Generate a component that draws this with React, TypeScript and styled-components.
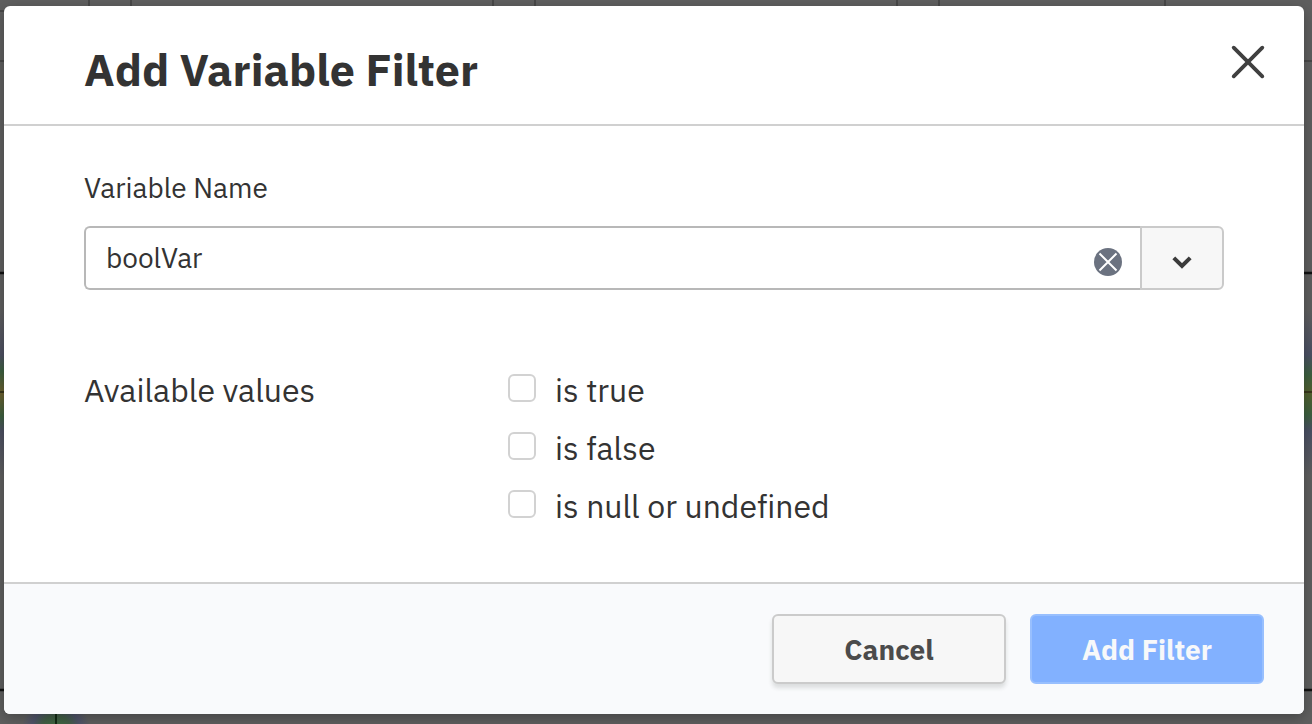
import React from 'react';
import styled, { createGlobalStyle } from 'styled-components';

const GlobalStyle = createGlobalStyle`
  * { box-sizing: border-box; }
  html, body { margin: 0; height: 100%; overflow: hidden; }
  body {
    font-family: "IBM Plex Sans", Roboto, "Noto Sans", sans-serif;
    font-variant-ligatures: none;
    color: #333;
    background: #5a5a5a;
    -webkit-font-smoothing: antialiased;
  }
`;

const Screen = styled.div`
  position: relative;
  width: 1312px;
  height: 724px;
  padding: 6px 8px 10px 4px;
  overflow: hidden;
`;

const Diagram = styled.svg`
  position: absolute;
  inset: 0;
`;

const Dialog = styled.section`
  position: relative;
  display: flex;
  flex-direction: column;
  height: 708px;
  border-radius: 6px;
  overflow: hidden;
  background: #fff;
  box-shadow: 0 4px 14px rgba(0, 0, 0, 0.28);
`;

const Header = styled.header`
  display: flex;
  justify-content: space-between;
  height: 120px;
  padding: 38px 38px 0 80px;
  border-bottom: 2px solid #d0d0d0;
`;

const Title = styled.h1`
  margin: -1px 0 0;
  font-size: 44.8px;
  line-height: 52px;
  font-weight: 700;
  white-space: nowrap;
`;

const IconButton = styled.button`
  display: flex;
  width: 36px;
  height: 36px;
  padding: 0;
  border: 0;
  background: none;
`;

const Body = styled.div`
  flex: 1;
  padding: 45px 80px 0;
`;

const Text = styled.span<{ $large?: boolean }>`
  font-size: ${(p) => (p.$large ? 32 : 28)}px;
  line-height: ${(p) => (p.$large ? 32 : 34)}px;
  white-space: nowrap;
`;

const FieldLabel = styled.label`
  display: flex;
  height: 55px;
`;

const Combo = styled.div`
  display: flex;
  height: 64px;
`;

const ComboInput = styled.div`
  flex: 1;
  display: flex;
  align-items: center;
  justify-content: space-between;
  padding: 0 18px 0 20px;
  border: 2px solid #b8b8b8;
  border-right: 0;
  border-radius: 6px 0 0 6px;
`;

const ClearButton = styled(IconButton)`
  width: 28px;
  height: 28px;
  margin-top: 8px;
`;

const ComboToggle = styled(IconButton)`
  width: 84px;
  height: 64px;
  align-items: center;
  justify-content: center;
  padding-top: 8px;
  border: 2px solid #cacaca;
  border-radius: 0 6px 6px 0;
  background: #f7f7f7;
`;

const Values = styled.div`
  display: grid;
  grid-template-columns: 424px 1fr;
  margin-top: 84px;
`;

const Options = styled.div`
  display: flex;
  flex-direction: column;
  gap: 24px;
`;

const Option = styled.label`
  display: flex;
  align-items: flex-start;
  gap: 19px;
  height: 34px;
`;

const Checkbox = styled.input`
  appearance: none;
  width: 28px;
  height: 28px;
  margin: 0;
  border: 2px solid #d2d2d2;
  border-radius: 6px;
  background: #fff;
`;

const Footer = styled.footer`
  display: flex;
  justify-content: flex-end;
  gap: 24px;
  height: 132px;
  padding: 30px 40px 0;
  border-top: 2px solid #d0d0d0;
  background: #f9fafc;
`;

const Button = styled.button<{ $primary?: boolean }>`
  width: 234px;
  height: 70px;
  padding: 2px 0 0;
  font: 700 28px/34px "IBM Plex Sans", Roboto, "Noto Sans", sans-serif;
  border: 2px solid ${(p) => (p.$primary ? '#98bffe' : '#cbcbcb')};
  border-radius: 6px;
  color: ${(p) => (p.$primary ? '#f7f8fa' : '#4b4b4b')};
  background: ${(p) => (p.$primary ? '#82b1ff' : '#f7f7f7')};
  box-shadow: ${(p) => (p.$primary ? 'none' : '0 4px 4px rgba(50, 60, 50, 0.14)')};
`;

const options = ['is true', 'is false', 'is null or undefined'];

const HeatDiagram = () => (
  <Diagram width="1312" height="724">
    <defs>
      <linearGradient id="heatLeft" x1="0" y1="0" x2="0" y2="1">
        <stop offset="0" stopColor="#5f5f5f" />
        <stop offset="0.27" stopColor="#4d5062" />
        <stop offset="0.37" stopColor="#3d6040" />
        <stop offset="0.5" stopColor="#6b602f" />
        <stop offset="0.64" stopColor="#3d6040" />
        <stop offset="0.73" stopColor="#4c5062" />
        <stop offset="1" stopColor="#5f5f5f" />
      </linearGradient>
      <linearGradient id="heatRight" x1="0" y1="0" x2="0" y2="1">
        <stop offset="0" stopColor="#5f5f5f" />
        <stop offset="0.27" stopColor="#4b5064" />
        <stop offset="0.39" stopColor="#3d6040" />
        <stop offset="0.5" stopColor="#52602f" />
        <stop offset="0.63" stopColor="#3d6040" />
        <stop offset="0.73" stopColor="#4a5064" />
        <stop offset="1" stopColor="#5f5f5f" />
      </linearGradient>
      <radialGradient id="spot">
        <stop offset="0" stopColor="#3d6b40" />
        <stop offset="0.4" stopColor="#435f47" />
        <stop offset="0.7" stopColor="#50546a" />
        <stop offset="1" stopColor="#5f5f5f" />
      </radialGradient>
    </defs>
    <rect width="1312" height="724" fill="#5f5f5f" />
    <rect y="310" width="656" height="166" fill="url(#heatLeft)" />
    <rect x="656" y="310" width="656" height="166" fill="url(#heatRight)" />
    <ellipse cx="56" cy="727" rx="34" ry="28" fill="url(#spot)" />
    <path d="M89 0V8M131 0V8M493 0V8M535 0V8M897 0V8M939 0V8M1165 0V8M0 11H4M0 61H4M1304 61H1312" stroke="#484848" strokeWidth="2" />
    <path d="M0 273H4M1304 273H1312M0 690H4M1304 690H1312" stroke="#111" strokeWidth="2.5" />
    <path d="M0 392H4M1304 392H1312" stroke="#38371b" strokeWidth="2" />
    <path d="M56 714V724" stroke="#122b15" strokeWidth="2" />
  </Diagram>
);

export default function App() {
  return (
    <>
      <GlobalStyle />
      <Screen>
        <HeatDiagram />
        <Dialog role="dialog">
          <Header>
            <Title>Add Variable Filter</Title>
            <IconButton aria-label="Close">
              <svg width="36" height="36" viewBox="0 0 36 36" fill="none" stroke="#404040" strokeWidth="3.8" strokeLinecap="round">
                <path d="M3.7 3.7 32.3 32.3M32.3 3.7 3.7 32.3" />
              </svg>
            </IconButton>
          </Header>
          <Body>
            <FieldLabel>
              <Text>Variable Name</Text>
            </FieldLabel>
            <Combo>
              <ComboInput>
                <Text>boolVar</Text>
                <ClearButton aria-label="Clear">
                  <svg width="28" height="28" viewBox="0 0 28 28" fill="none">
                    <circle cx="14" cy="14" r="14" fill="#6b7280" />
                    <path d="M5.5 5.5 22.5 22.5M22.5 5.5 5.5 22.5" stroke="#fff" strokeWidth="2" />
                  </svg>
                </ClearButton>
              </ComboInput>
              <ComboToggle aria-label="Show options">
                <svg width="20" height="14" viewBox="0 0 20 14" fill="none" stroke="#3b3b3b" strokeWidth="4">
                  <path d="M1.8 2.8 10 11 18.2 2.8" />
                </svg>
              </ComboToggle>
            </Combo>
            <Values>
              <Text $large>Available values</Text>
              <Options>
                {options.map((label) => (
                  <Option key={label}>
                    <Checkbox type="checkbox" />
                    <Text $large>{label}</Text>
                  </Option>
                ))}
              </Options>
            </Values>
          </Body>
          <Footer>
            <Button>Cancel</Button>
            <Button $primary>Add Filter</Button>
          </Footer>
        </Dialog>
      </Screen>
    </>
  );
}
